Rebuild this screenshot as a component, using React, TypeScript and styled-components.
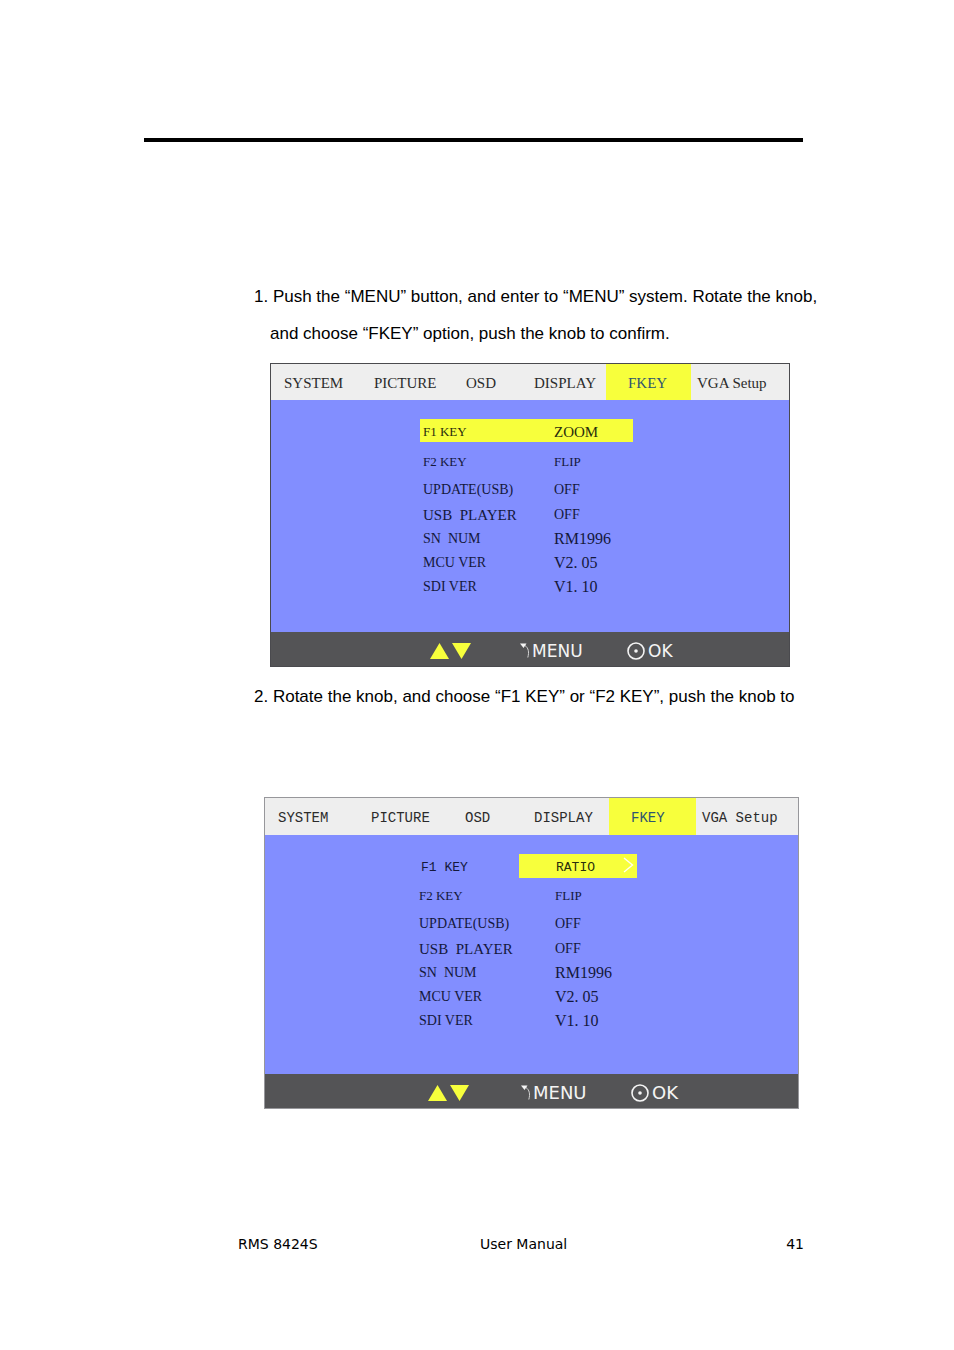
import React from "react";
import styled, { createGlobalStyle } from "styled-components";

const BODY_FONT: string = `"Liberation Sans", Arial, sans-serif`;
const SERIF_FONT: string = `"Liberation Serif", "Times New Roman", serif`;
const MONO_FONT: string = `"Liberation Mono", "Courier New", monospace`;
const WIDE_FONT: string = `"DejaVu Sans", Verdana, sans-serif`;

interface SettingData {
   label: string,
   value: string,
   label_size: number,
   value_size: number,
   gap?: number,
}

interface OsdScreenProps {
   tab_columns: string,
   body_columns: string,
   bar_columns: string,
   is_editing?: boolean,
}

const GlobalStyle = createGlobalStyle`
   * { box-sizing: border-box; }
   body {
      margin: 0;
      background: #ffffff;
      color: #000000;
      font-family: ${BODY_FONT};
   }
   button {
      margin: 0;
      padding: 0;
      border: none;
      background: none;
      color: inherit;
      font: inherit;
      cursor: pointer;
   }
`;

const Page = styled.main`
   padding: 138px 136px 96px 144px;
`;

const Rule = styled.hr`
   height: 4px;
   margin: 0 15px 136px 0;
   border: none;
   background: #000000;
`;

const Content = styled.div`
   margin-left: 110px;
`;

const Step = styled.p`
   margin: 0;
   padding-left: 16px;
   text-indent: -16px;
   font-size: 17px;
   line-height: 37px;
`;

const Figure = styled.figure<{ $margin: string, $line: string }>`
   margin: ${(p) => p.$margin};
   border: 1px solid ${(p) => p.$line};
   background: #828eff;
`;

const TabBar = styled.nav<{ $columns: string, $mono?: boolean }>`
   display: grid;
   grid-template-columns: ${(p) => p.$columns};
   height: ${(p) => (p.$mono ? 37 : 36)}px;
   background: #eeeeee;
   color: #2b2b2b;
   font-family: ${(p) => (p.$mono ? MONO_FONT : SERIF_FONT)};
   font-size: ${(p) => (p.$mono ? 14 : 15)}px;
`;

const Tab = styled.button<{ $active: boolean }>`
   padding: 3px 0 0 ${(p) => (p.$active ? 22 : 13)}px;
   text-align: left;
   white-space: nowrap;
   ${(p) => p.$active && "background: #f7ff3c; color: #2f5570;"}

   &:last-child {
      padding-left: 6px;
   }
`;

const Body = styled.div<{ $columns: string, $bottom: number }>`
   display: grid;
   grid-template-columns: ${(p) => p.$columns};
   padding: 19px 0 ${(p) => p.$bottom}px;
   color: #14183c;
   font-family: ${SERIF_FONT};
`;

const SettingList = styled.dl`
   grid-column: 2;
   margin: 0;
`;

const Setting = styled.div<{ $gap?: number }>`
   display: grid;
   grid-template-columns: 131fr 79fr;
   align-items: center;
   height: 24px;
   margin-top: ${(p) => p.$gap ?? 0}px;
   padding-left: 3px;
`;

const SelectedSetting = styled(Setting)`
   height: 23px;
   margin-bottom: 8px;
   padding-top: 2px;
   background: #f7ff3c;
   color: #2a2e0c;
`;

const EditedSetting = styled.div`
   display: grid;
   grid-template-columns: 103fr 118fr;
   align-items: center;
   height: 24px;
   margin-bottom: 6px;
   font-family: ${MONO_FONT};
   font-size: 13px;
`;

const Label = styled.dt<{ $size?: number }>`
   font-size: ${(p) => p.$size ?? 13}px;
   line-height: 20px;
   white-space: pre;
`;

const EditedLabel = styled(Label)`
   padding: 4px 0 0 5px;
`;

const Value = styled.dd<{ $size?: number }>`
   margin: 0;
   font-size: ${(p) => p.$size ?? 13}px;
   line-height: 20px;
   white-space: pre;
`;

const ValuePicker = styled.button`
   display: flex;
   align-items: center;
   justify-content: space-between;
   width: 100%;
   height: 24px;
   padding: 4px 3px 0 37px;
   background: #f7ff3c;
   color: #2a2e0c;

   & svg {
      margin-bottom: 6px;
   }
`;

const KeyBar = styled.div<{ $columns: string, $size: number }>`
   display: grid;
   grid-template-columns: ${(p) => p.$columns};
   align-items: center;
   height: 34px;
   padding-top: 3px;
   background: #545456;
   color: #f4f4f4;
   font-family: ${WIDE_FONT};
   font-size: ${(p) => p.$size}px;
   line-height: 20px;
`;

const KeyHint = styled.span`
   display: flex;
   align-items: center;
   gap: 3px;

   &:first-child {
      grid-column: 2;
   }
`;

const MenuHint = styled(KeyHint)`
   gap: 2px;
`;

const PageFooter = styled.footer`
   display: grid;
   grid-template-columns: 242fr 200fr 124fr;
   margin: 125px 14px 0 94px;
   font-family: ${WIDE_FONT};
   font-size: 14px;
   line-height: 20px;

   & span:last-child {
      text-align: right;
   }
`;

const tabs: string[] = ["SYSTEM", "PICTURE", "OSD", "DISPLAY", "FKEY", "VGA Setup"];

const settings: SettingData[] = [
   { label: "F2 KEY", value: "FLIP", label_size: 13, value_size: 13 },
   { label: "UPDATE(USB)", value: "OFF", label_size: 14, value_size: 14, gap: 4 },
   { label: "USB  PLAYER", value: "OFF", label_size: 15, value_size: 14, gap: 1 },
   { label: "SN  NUM", value: "RM1996", label_size: 14, value_size: 16 },
   { label: "MCU VER", value: "V2. 05", label_size: 14, value_size: 16 },
   { label: "SDI VER", value: "V1. 10", label_size: 14, value_size: 16 },
];

const Arrows = () => (
   <svg width="41" height="18" viewBox="0 0 41 18" fill="#f7ff3c" role="img" aria-label="Up and down">
      <path d="M0 17 L9.5 1 L19 17 Z" />
      <path d="M22 1 H41 L31.5 17 Z" />
   </svg>
);

const ReturnIcon = () => (
   <svg width="10" height="18" viewBox="0 0 10 18" aria-hidden="true">
      <path d="M0 1.5 H6.5 L3.5 6 Z" fill="#f4f4f4" />
      <path d="M5 3.5 C8.5 6 9.3 10 7.8 15.5" fill="none" stroke="#d4d4d4" strokeWidth="1" />
   </svg>
);

const KnobIcon = () => (
   <svg width="18" height="18" viewBox="0 0 18 18" aria-hidden="true">
      <circle cx="9" cy="9" r="8" fill="none" stroke="#f4f4f4" strokeWidth="1.6" />
      <circle cx="9" cy="9" r="1.8" fill="#f4f4f4" />
   </svg>
);

const Chevron = () => (
   <svg width="11" height="16" viewBox="0 0 11 16" aria-hidden="true">
      <path d="M1 1 L9.5 8 L1 15" fill="none" stroke="#fffff0" strokeWidth="1.4" />
   </svg>
);

const OsdScreen: React.FC<OsdScreenProps> = (props) => {
   return (
      <>
         <TabBar $columns={props.tab_columns} $mono={props.is_editing}>
            {tabs.map((tab) => (
               <Tab key={tab} type="button" $active={tab === "FKEY"}>{tab}</Tab>
            ))}
         </TabBar>
         <Body $columns={props.body_columns} $bottom={props.is_editing ? 41 : 33}>
            <SettingList>
               {props.is_editing ?
                  <EditedSetting>
                     <EditedLabel>F1 KEY</EditedLabel>
                     <Value>
                        <ValuePicker type="button">RATIO<Chevron /></ValuePicker>
                     </Value>
                  </EditedSetting> :
                  <SelectedSetting>
                     <Label $size={13}>F1 KEY</Label>
                     <Value $size={15}>ZOOM</Value>
                  </SelectedSetting>
               }
               {settings.map((row) => (
                  <Setting key={row.label} $gap={row.gap}>
                     <Label $size={row.label_size}>{row.label}</Label>
                     <Value $size={row.value_size}>{row.value}</Value>
                  </Setting>
               ))}
            </SettingList>
         </Body>
         <KeyBar $columns={props.bar_columns} $size={props.is_editing ? 18 : 17}>
            <KeyHint><Arrows /></KeyHint>
            <MenuHint><ReturnIcon />MENU</MenuHint>
            <KeyHint><KnobIcon />OK</KeyHint>
         </KeyBar>
      </>
   );
}

const App: React.FC = () => {
   return (
      <Page>
         <GlobalStyle />
         <Rule />
         <Content>
            <Step>
               1. Push the “MENU” button, and enter to “MENU” system. Rotate the knob, and
               choose “FKEY” option, push the knob to confirm.
            </Step>
            <Figure $margin="11px 28px 11px 16px" $line="#4a4a4e">
               <OsdScreen
                  tab_columns="90fr 92fr 68fr 85fr 85fr 98fr"
                  body_columns="149fr 213fr 156fr"
                  bar_columns="159fr 90fr 107fr 162fr"
               />
            </Figure>
            <Step>2. Rotate the knob, and choose “F1 KEY” or “F2 KEY”, push the knob to</Step>
            <Figure $margin="82px 19px 0 10px" $line="#97979b">
               <OsdScreen
                  tab_columns="93fr 94fr 69fr 88fr 87fr 102fr"
                  body_columns="151fr 221fr 161fr"
                  bar_columns="163fr 93fr 110fr 167fr"
                  is_editing
               />
            </Figure>
         </Content>
         <PageFooter>
            <span>RMS 8424S</span>
            <span>User Manual</span>
            <span>41</span>
         </PageFooter>
      </Page>
   );
}

export default App;
